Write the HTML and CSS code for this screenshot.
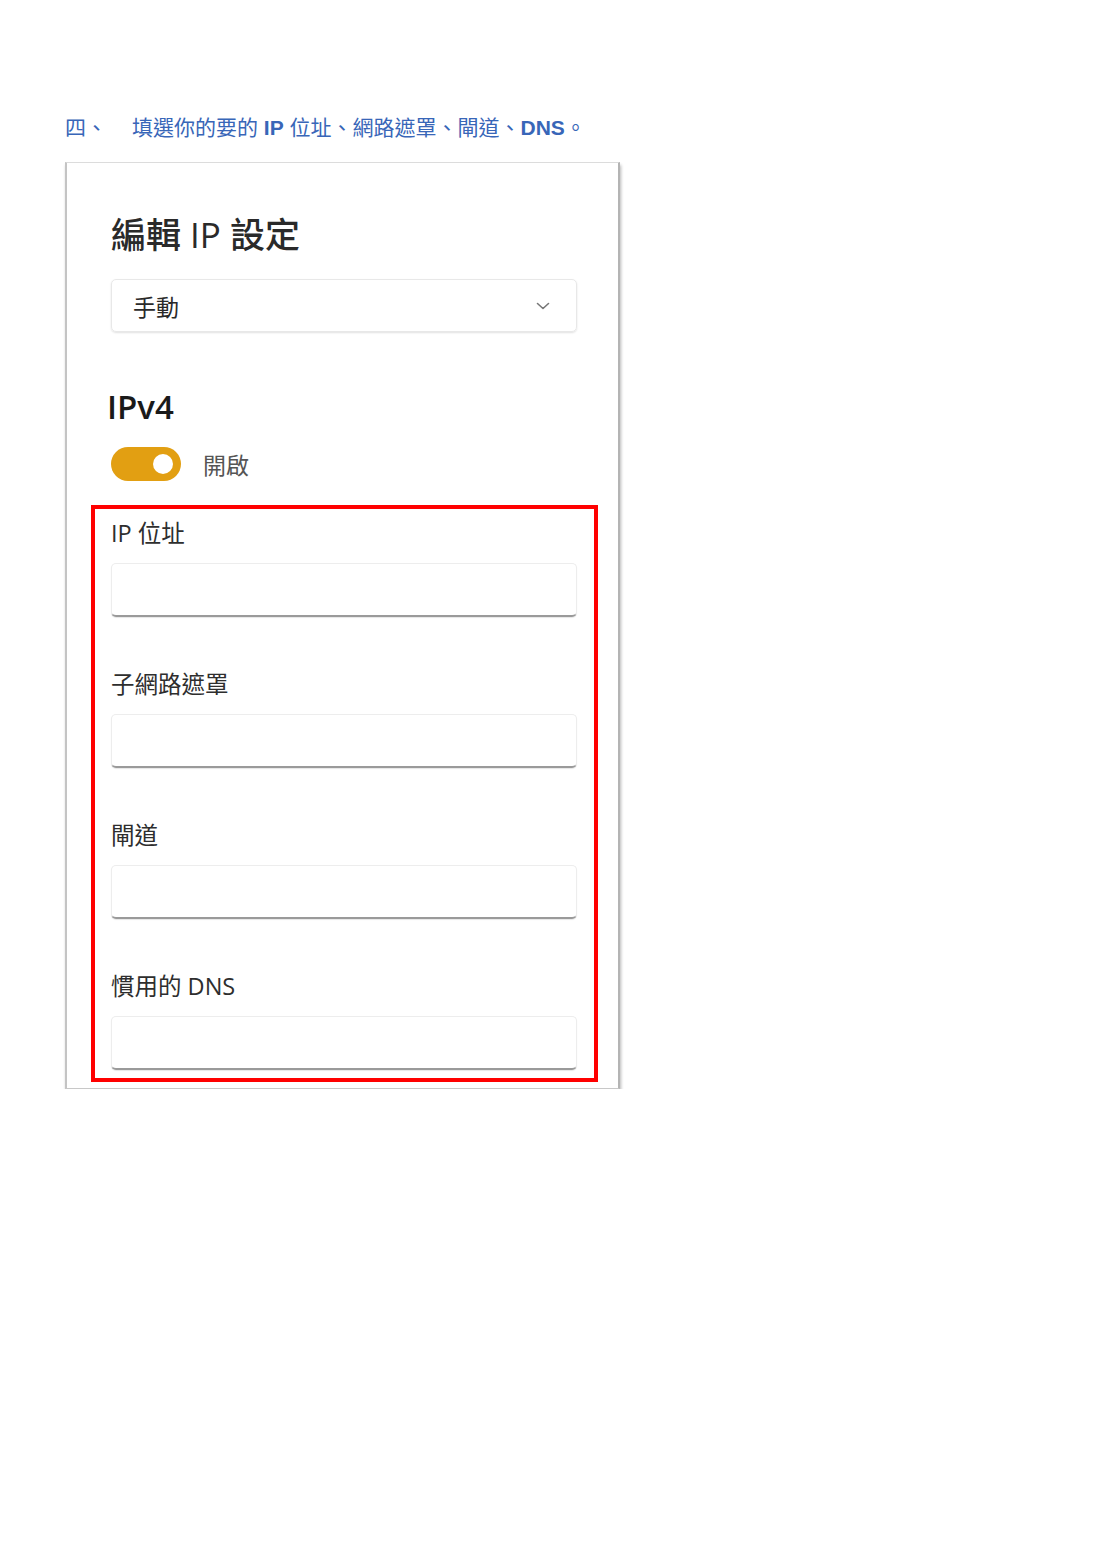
FILE: index.html
```html
<!DOCTYPE html>
<html lang="zh-Hant">
<head>
<meta charset="utf-8">
<link rel="stylesheet" href="styles.css">
</head>
<body>
<div class="page">
  <p class="step"><span class="num">四、</span><span class="txt">填選你的要的 <b>IP</b> 位址、網路遮罩、閘道、<b>DNS</b>。</span></p>
  <div class="panel">
    <h1 class="title">編輯 IP 設定</h1>
    <div class="select">
      <span>手動</span>
      <svg class="chev" width="14" height="8" viewBox="0 0 14 8"><path d="M1.5 1.5 L7 6.5 L12.5 1.5" fill="none" stroke="#777" stroke-width="1.6" stroke-linecap="round" stroke-linejoin="round"/></svg>
    </div>
    <h2 class="sub">IPv4</h2>
    <div class="toggle-row">
      <div class="toggle"><div class="knob"></div></div>
      <span class="toggle-label">開啟</span>
    </div>
    <div class="highlight">
      <div class="field">
        <div class="label">IP 位址</div>
        <div class="input"></div>
      </div>
      <div class="field">
        <div class="label">子網路遮罩</div>
        <div class="input"></div>
      </div>
      <div class="field">
        <div class="label">閘道</div>
        <div class="input"></div>
      </div>
      <div class="field">
        <div class="label">慣用的 DNS</div>
        <div class="input"></div>
      </div>
    </div>
  </div>
</div>
</body>
</html>
```
FILE: styles.css
```css
html, body {
  margin: 0;
  padding: 0;
  background: #fff;
}
.page {
  padding: 114px 0 0 65px;
}
.step {
  margin: 0;
  font-family: "Liberation Sans", "Noto Sans CJK TC", sans-serif;
  font-size: 21px;
  line-height: 28px;
  color: #3866b8;
  display: flex;
}
.step .num {
  width: 67px;
}
.step b {
  font-weight: bold;
}
.panel {
  margin-top: 20px;
  width: 555px;
  box-sizing: border-box;
  border-top: 1px solid #dcdcdc;
  border-left: 2px solid #c4c4c4;
  border-right: 2px solid #b4b4b4;
  border-bottom: 1px solid #c8c8c8;
  box-shadow: 1px 3px 3px rgba(0,0,0,0.28);
  padding: 50px 0 6px 44px;
  background: #fff;
  font-family: "Open Sans", "Noto Sans CJK TC", sans-serif;
  color: #222;
}
.title {
  margin: 0;
  font-family: "Open Sans", "Noto Sans CJK TC", sans-serif;
  font-size: 35px;
  line-height: 44px;
  font-weight: 500;
  color: #2a2a2a;
}
.select {
  margin-top: 22px;
  width: 466px;
  height: 53px;
  box-sizing: border-box;
  border: 1px solid #e8e8e8;
  border-radius: 5px;
  box-shadow: 0 1px 2px rgba(0,0,0,0.12);
  display: flex;
  align-items: center;
  justify-content: space-between;
  padding: 0 26px 0 21px;
  font-family: "Noto Sans CJK TC", sans-serif;
  font-size: 23px;
  color: #2a2a2a;
}
.chev {
  display: block;
}
.sub {
  margin: 52px 0 0 -4px;
  font-family: "Open Sans", sans-serif;
  font-size: 33px;
  line-height: 46px;
  font-weight: 600;
  color: #1a1a1a;
}
.toggle-row {
  margin-top: 17px;
  display: flex;
  align-items: center;
  gap: 22px;
  height: 34px;
}
.toggle {
  width: 70px;
  height: 34px;
  border-radius: 17px;
  background: #e29f12;
  display: flex;
  align-items: center;
  justify-content: flex-end;
  padding-right: 8px;
  box-sizing: border-box;
}
.knob {
  width: 20px;
  height: 20px;
  border-radius: 50%;
  background: #fff;
}
.toggle-label {
  font-family: "Noto Sans CJK TC", sans-serif;
  font-size: 23px;
  color: #555;
}
.highlight {
  margin: 24px 0 0 -20px;
  width: 507px;
  box-sizing: border-box;
  border: 4px solid #ff0000;
  padding: 9px 17px 8px 16px;
  display: flex;
  flex-direction: column;
  gap: 52px;
}
.field {
  display: flex;
  flex-direction: column;
  gap: 15px;
}
.label {
  font-family: "Open Sans", "Noto Sans CJK TC", sans-serif;
  font-size: 23.5px;
  line-height: 30px;
  color: #2e2e2e;
}
.input {
  height: 54px;
  box-sizing: border-box;
  border: 1px solid #ededed;
  border-bottom: 2px solid #9a9a9a;
  border-radius: 5px;
  background: #fff;
  box-shadow: 0 1px 1px rgba(0,0,0,0.1);
}
```
